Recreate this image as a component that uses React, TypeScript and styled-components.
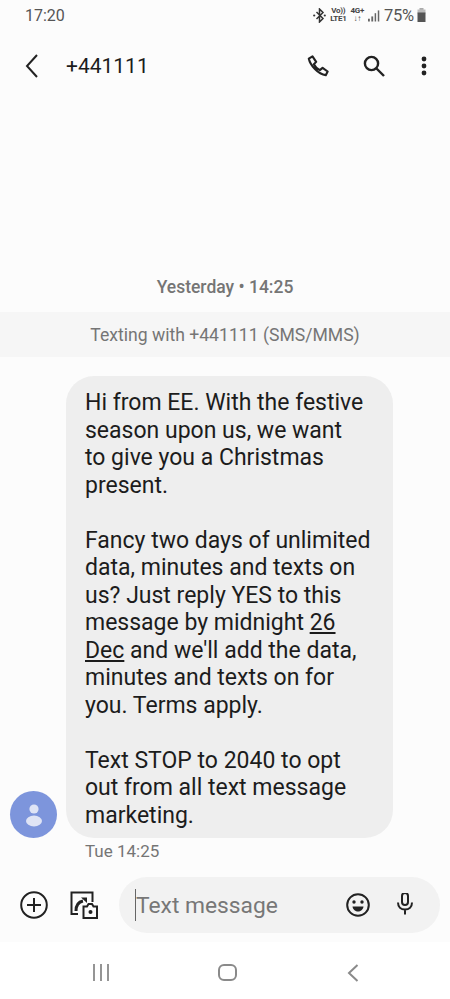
import React from 'react';
import styled, { createGlobalStyle } from 'styled-components';

const GlobalStyle = createGlobalStyle`
  html, body {
    margin: 0;
    padding: 0;
    background: #fcfcfc;
  }
  * {
    box-sizing: border-box;
  }
`;

const Screen = styled.div`
  width: 450px;
  height: 999px;
  display: flex;
  flex-direction: column;
  overflow: hidden;
  background: #fcfcfc;
  font-family: Roboto, 'Liberation Sans', sans-serif;
  color: #1c1c1c;
`;

const StatusBar = styled.div`
  height: 30px;
  padding: 0 24px 0 25px;
  display: flex;
  align-items: center;
  justify-content: space-between;
  color: #555;
`;

const Clock = styled.span`
  font-size: 16px;
`;

const StatusIcons = styled.div`
  display: flex;
  align-items: center;
  gap: 4px;
`;

const NetText = styled.span`
  font-size: 8px;
  line-height: 8px;
  font-weight: 700;
  letter-spacing: -0.3px;
  text-align: center;
  display: block;
  color: #444;
`;

const Battery = styled.span`
  font-size: 16.5px;
  letter-spacing: -0.2px;
  margin-right: -1px;
`;

const Header = styled.header`
  height: 72px;
  padding: 0 21px 0 22px;
  display: flex;
  align-items: center;
`;

const Title = styled.h1`
  flex: 1;
  margin: 0 0 0 24px;
  font-size: 21px;
  font-weight: 400;
`;

const HeaderActions = styled.div`
  display: flex;
  align-items: center;
  gap: 34px;
`;

const Thread = styled.main`
  flex: 1;
  display: flex;
  flex-direction: column;
  justify-content: flex-end;
`;

const DateLabel = styled.div`
  text-align: center;
  font-size: 17.5px;
  font-weight: 500;
  color: #757575;
  line-height: 20px;
  margin-bottom: 15px;
`;

const Banner = styled.div`
  height: 45px;
  background: #f6f6f6;
  display: flex;
  align-items: center;
  justify-content: center;
  font-size: 17.6px;
  color: #757575;
`;

const MessageRow = styled.div`
  margin-top: 19px;
  padding-left: 10px;
  display: flex;
  align-items: flex-end;
  gap: 9px;
`;

const Avatar = styled.div`
  width: 47px;
  height: 47px;
  border-radius: 50%;
  background: #7d95dc;
  display: flex;
  align-items: center;
  justify-content: center;
  flex-shrink: 0;
`;

const Bubble = styled.div`
  width: 327px;
  height: 462px;
  padding: 13px 19px 0;
  border-radius: 28px;
  background: #eeeeee;
  font-size: 23px;
  line-height: 27.5px;
  color: #1c1c1c;
  white-space: nowrap;
`;

const Paragraph = styled.p`
  margin: 0 0 27.5px;
  &:last-child {
    margin-bottom: 0;
  }
`;

const DateLink = styled.span`
  text-decoration: underline;
`;

const Timestamp = styled.div`
  margin: 3px 0 0 85px;
  font-size: 17px;
  line-height: 20px;
  color: #757575;
`;

const Composer = styled.div`
  margin-top: 16px;
  height: 65px;
  padding: 0 10px 9px 20px;
  display: flex;
  align-items: center;
`;

const ComposerTools = styled.div`
  display: flex;
  align-items: center;
  gap: 22px;
  margin-right: 21px;
`;

const InputPill = styled.div`
  flex: 1;
  height: 56px;
  border-radius: 28px;
  background: #f2f2f2;
  padding: 0 26px 0 16px;
  display: flex;
  align-items: center;
`;

const Caret = styled.span`
  width: 1px;
  height: 32px;
  background: #666;
  flex-shrink: 0;
`;

const Placeholder = styled.span`
  flex: 1;
  font-size: 22.8px;
  color: #777;
`;

const PillIcons = styled.div`
  display: flex;
  align-items: center;
  gap: 26px;
`;

const NavBar = styled.nav`
  height: 57px;
  background: #ffffff;
  display: grid;
  grid-template-columns: repeat(3, 1fr);
  align-items: center;
  justify-items: center;
  padding: 4px 34px 0 38px;
`;

const Svg = styled.svg`
  display: block;
  flex-shrink: 0;
`;

const BluetoothIcon = () => (
  <Svg width="13" height="15" viewBox="0 0 13 15" fill="none" stroke="#333" strokeWidth="1.500">
    <path d="M3.500 4 10 10.500 6.500 14V1L10 4.500 3.500 11" />
    <circle cx="1.200" cy="7.500" r="1.100" fill="#333" stroke="none" />
    <circle cx="11.800" cy="7.500" r="1.100" fill="#333" stroke="none" />
  </Svg>
);

const SignalIcon = () => (
  <Svg width="12" height="13" viewBox="0 0 13 13" fill="#666">
    <rect x="0" y="10" width="2" height="3" />
    <rect x="3.600" y="7.500" width="2" height="5.500" />
    <rect x="7.200" y="4" width="1.600" height="9" />
    <rect x="10.600" y="1" width="1.600" height="12" />
  </Svg>
);

const BatteryIcon = () => (
  <Svg width="9" height="14" viewBox="0 0 9 14">
    <rect x="2.500" y="0" width="4" height="2" fill="#aaa" />
    <rect x="0.500" y="1.500" width="8" height="4" fill="#bbb" />
    <rect x="0.500" y="4.500" width="8" height="9.500" fill="#555" />
  </Svg>
);

const BackIcon = () => (
  <Svg width="20" height="26" viewBox="0 0 20 26" fill="none" stroke="#222" strokeWidth="2">
    <path d="M15 2 5 13l10 11" />
  </Svg>
);

const PhoneIcon = () => (
  <Svg width="22" height="22" viewBox="0 0 24 24" fill="none" stroke="#222" strokeWidth="2.300" strokeLinejoin="round">
    <path d="M2 4 6 1.500 10 7.500 7.500 10C9 13 11 15 14 16.500L17 14 22.500 18 20.500 22C12 21 3.500 11 2 4Z" />
  </Svg>
);

const SearchIcon = () => (
  <Svg width="22" height="22" viewBox="0 0 22 22" fill="none" stroke="#222" strokeWidth="2.400">
    <circle cx="8.500" cy="8.500" r="6.600" />
    <path d="M13.500 13.500 21 21" />
  </Svg>
);

const MoreIcon = () => (
  <Svg width="10" height="20" viewBox="0 0 10 20" fill="#222">
    <circle cx="5" cy="3" r="2.400" />
    <circle cx="5" cy="10" r="2.400" />
    <circle cx="5" cy="17" r="2.400" />
  </Svg>
);

const PersonIcon = () => (
  <Svg width="18" height="24" viewBox="0 0 18 24" fill="#dfe4f5">
    <circle cx="9" cy="6" r="4.600" />
    <ellipse cx="9" cy="18" rx="8" ry="5.400" />
  </Svg>
);

const PlusIcon = () => (
  <Svg width="28" height="28" viewBox="0 0 28 28" fill="none" stroke="#222" strokeWidth="2">
    <circle cx="14" cy="14" r="12.800" />
    <path d="M14 7v14M7 14h14" />
  </Svg>
);

const GalleryIcon = () => (
  <Svg width="28" height="28" viewBox="0 0 28 28" fill="none" stroke="#222" strokeWidth="2">
    <path d="M8 23H1.500V1.500h21V11" />
    <path d="M6 20c0-5 2-9 7-10" strokeWidth="3" />
    <path d="M11 6.500h6V12Z" fill="#222" stroke="none" />
    <path d="M13.500 27V15.500h3.500l1.500-2.500h3.500l1.500 2.500h3.500V27Z" />
    <circle cx="20.500" cy="21" r="2" fill="#222" stroke="none" />
  </Svg>
);

const EmojiIcon = () => (
  <Svg width="24" height="24" viewBox="0 0 24 24" fill="none" stroke="#222" strokeWidth="2">
    <circle cx="12" cy="12" r="10.800" />
    <circle cx="8" cy="9" r="1.700" fill="#222" stroke="none" />
    <circle cx="16" cy="9" r="1.700" fill="#222" stroke="none" />
    <path d="M6.500 13.500h11c-.5 3.500-3 5-5.500 5s-5-1.500-5.500-5Z" fill="#222" stroke="none" />
  </Svg>
);

const MicIcon = () => (
  <Svg width="18" height="24" viewBox="0 0 18 24" fill="none" stroke="#222" strokeWidth="2">
    <rect x="6" y="0" width="6" height="12" rx="3" />
    <path d="M2 9.500c0 4.500 3 7 7 7s7-2.500 7-7M9 16.500v5" />
  </Svg>
);

const RecentsIcon = () => (
  <Svg width="18" height="17" viewBox="0 0 18 17" fill="none" stroke="#8a8a8a" strokeWidth="1.800">
    <path d="M2 0v17M9 0v17M16 0v17" />
  </Svg>
);

const HomeIcon = () => (
  <Svg width="19" height="17" viewBox="0 0 19 17" fill="none" stroke="#8a8a8a" strokeWidth="2">
    <rect x="1" y="1" width="17" height="15" rx="5" />
  </Svg>
);

const NavBackIcon = () => (
  <Svg width="12" height="18" viewBox="0 0 12 18" fill="none" stroke="#8a8a8a" strokeWidth="2">
    <path d="M10.500 1 2 9l8.500 8" />
  </Svg>
);

export default function App() {
  return (
    <Screen>
      <GlobalStyle />
      <StatusBar>
        <Clock>17:20</Clock>
        <StatusIcons>
          <BluetoothIcon />
          <NetText>
            Vo))
            <br />
            LTE1
          </NetText>
          <NetText>
            4G+
            <br />
            ↓↑
          </NetText>
          <SignalIcon />
          <Battery>75%</Battery>
          <BatteryIcon />
        </StatusIcons>
      </StatusBar>
      <Header>
        <BackIcon />
        <Title>+441111</Title>
        <HeaderActions>
          <PhoneIcon />
          <SearchIcon />
          <MoreIcon />
        </HeaderActions>
      </Header>
      <Thread>
        <DateLabel>Yesterday • 14:25</DateLabel>
        <Banner>Texting with +441111 (SMS/MMS)</Banner>
        <MessageRow>
          <Avatar>
            <PersonIcon />
          </Avatar>
          <Bubble>
            <Paragraph>
              Hi from EE. With the festive
              <br />
              season upon us, we want
              <br />
              to give you a Christmas
              <br />
              present.
            </Paragraph>
            <Paragraph>
              Fancy two days of unlimited
              <br />
              data, minutes and texts on
              <br />
              us? Just reply YES to this
              <br />
              message by midnight <DateLink>26</DateLink>
              <br />
              <DateLink>Dec</DateLink> and we'll add the data,
              <br />
              minutes and texts on for
              <br />
              you. Terms apply.
            </Paragraph>
            <Paragraph>
              Text STOP to 2040 to opt
              <br />
              out from all text message
              <br />
              marketing.
            </Paragraph>
          </Bubble>
        </MessageRow>
        <Timestamp>Tue 14:25</Timestamp>
      </Thread>
      <Composer>
        <ComposerTools>
          <PlusIcon />
          <GalleryIcon />
        </ComposerTools>
        <InputPill>
          <Caret />
          <Placeholder>Text message</Placeholder>
          <PillIcons>
            <EmojiIcon />
            <MicIcon />
          </PillIcons>
        </InputPill>
      </Composer>
      <NavBar>
        <RecentsIcon />
        <HomeIcon />
        <NavBackIcon />
      </NavBar>
    </Screen>
  );
}
